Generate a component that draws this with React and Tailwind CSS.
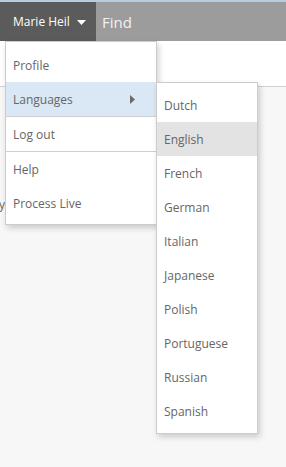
const LANGUAGES = ['Dutch', 'English', 'French', 'German', 'Italian', 'Japanese', 'Polish', 'Portuguese', 'Russian', 'Spanish'];

function Row({ children, active, hover }) {
  return (
    <div
      className={
        'h-[34px] flex items-center pl-[7px] pr-2 pt-[2px] text-[12px] text-[#666] ' +
        (active ? 'bg-[#d9e8f4] ' : '') +
        (hover ? 'bg-[#e3e3e3] ' : '')
      }
    >
      {children}
    </div>
  );
}

export default function App() {
  return (
    <div
      className="relative w-[286px] h-[467px] overflow-hidden bg-[#f7f7f7]"
      style={{ fontFamily: '"Open Sans", "Noto Sans", sans-serif' }}
    >
      {/* Top bar */}
      <div className="flex h-[41px] border-t-2 border-[#b9cde0]">
        <div className="w-[96px] bg-[#5b5b5b] flex items-center pl-[13px] gap-[7px] text-white text-[12px] pt-[1px]">
          <span>Marie Heil</span>
          <svg width="9" height="5" viewBox="0 0 9 5">
            <path d="M0 0h9L4.5 5z" fill="#fff" />
          </svg>
        </div>
        <div className="flex-1 bg-[#9c9c9c] flex items-center pl-[6px] pt-[1px] text-[15px] text-[#f2f2f2]">
          Find
        </div>
      </div>

      {/* Page content behind the menu */}
      <div className="h-[46px] bg-white border-b border-[#d0d0d0]" />
      <div className="pt-[109px] -ml-px text-[12px] text-[#666] leading-[18px]">y.</div>

      {/* User menu */}
      <div className="absolute left-[5px] top-[41px] w-[152px] bg-white border border-[#cccccc] pt-[6px] pb-[4px] shadow-[2px_3px_6px_rgba(0,0,0,0.18)]">
        <Row>Profile</Row>
        <Row active>
          <span className="flex-1">Languages</span>
          <svg width="5" height="9" viewBox="0 0 5 9" className="mr-[13px] -mt-[2px]">
            <path d="M0 0l5 4.5L0 9z" fill="#6b6b6b" />
          </svg>
        </Row>
        <div className="h-px bg-[#cfcfcf]" />
        <Row>Log out</Row>
        <div className="h-px bg-[#cfcfcf]" />
        <Row>Help</Row>
        <Row>Process Live</Row>
      </div>

      {/* Languages submenu */}
      <div className="absolute left-[156px] top-[82px] w-[102px] bg-white border border-[#cccccc] pt-[5px] pb-[5px] shadow-[2px_3px_6px_rgba(0,0,0,0.18)]">
        {LANGUAGES.map(lang => (
          <Row key={lang} hover={lang === 'English'}>{lang}</Row>
        ))}
      </div>
    </div>
  );
}
